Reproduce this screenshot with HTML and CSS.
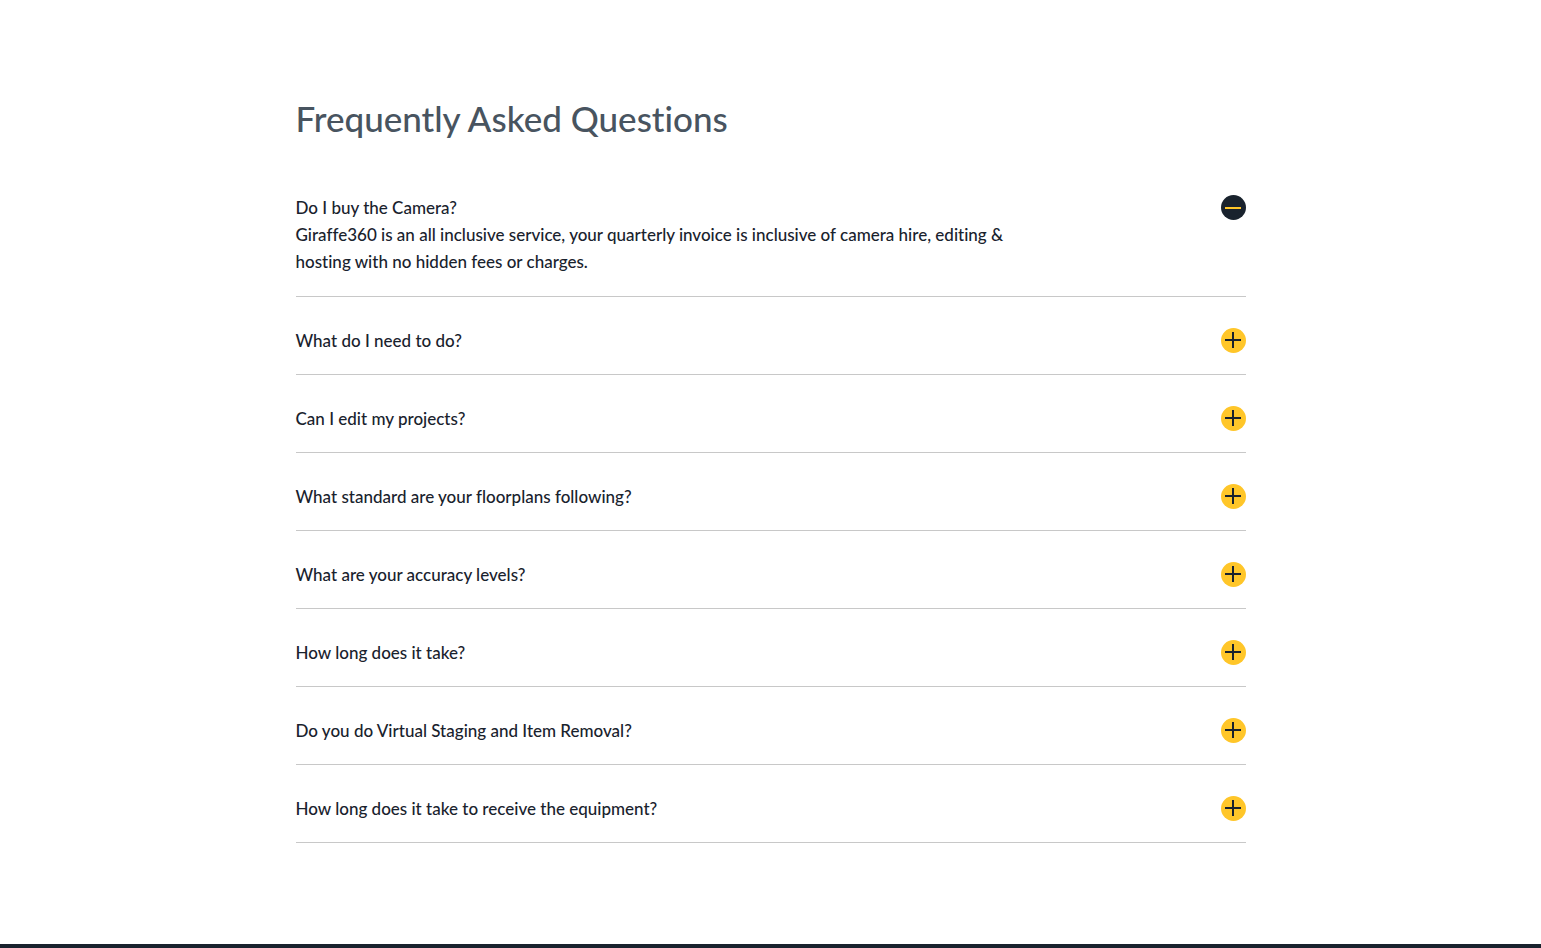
FILE: index.html
```html
<!DOCTYPE html>
<html lang="en">
<head>
    <meta charset="UTF-8">
    <meta name="viewport" content="width=device-width, initial-scale=1.0">
    <title>Frequently Asked Questions</title>
    <link rel="stylesheet" href="styles.css">
</head>
<body>
    <main class="faq">
        <h1 class="faq-title">Frequently Asked Questions</h1>

        <details class="faq-item" open>
            <summary>
                <span>Do I buy the Camera?</span>
                <svg class="icon" viewBox="0 0 25 25" aria-hidden="true"><circle cx="12.5" cy="12.5" r="12.5"/><path class="minus" d="M4 12h16v2H4z"/><path class="plus" d="M4 11h7V4h2v7h7v2h-7v7h-2v-7H4z"/></svg>
            </summary>
            <p class="answer">Giraffe360 is an all inclusive service, your quarterly invoice is inclusive of camera hire, editing &amp; hosting with no hidden fees or charges.</p>
        </details>

        <details class="faq-item">
            <summary>
                <span>What do I need to do?</span>
                <svg class="icon" viewBox="0 0 25 25" aria-hidden="true"><circle cx="12.5" cy="12.5" r="12.5"/><path class="minus" d="M4 12h16v2H4z"/><path class="plus" d="M4 11h7V4h2v7h7v2h-7v7h-2v-7H4z"/></svg>
            </summary>
        </details>

        <details class="faq-item">
            <summary>
                <span>Can I edit my projects?</span>
                <svg class="icon" viewBox="0 0 25 25" aria-hidden="true"><circle cx="12.5" cy="12.5" r="12.5"/><path class="minus" d="M4 12h16v2H4z"/><path class="plus" d="M4 11h7V4h2v7h7v2h-7v7h-2v-7H4z"/></svg>
            </summary>
        </details>

        <details class="faq-item">
            <summary>
                <span>What standard are your floorplans following?</span>
                <svg class="icon" viewBox="0 0 25 25" aria-hidden="true"><circle cx="12.5" cy="12.5" r="12.5"/><path class="minus" d="M4 12h16v2H4z"/><path class="plus" d="M4 11h7V4h2v7h7v2h-7v7h-2v-7H4z"/></svg>
            </summary>
        </details>

        <details class="faq-item">
            <summary>
                <span>What are your accuracy levels?</span>
                <svg class="icon" viewBox="0 0 25 25" aria-hidden="true"><circle cx="12.5" cy="12.5" r="12.5"/><path class="minus" d="M4 12h16v2H4z"/><path class="plus" d="M4 11h7V4h2v7h7v2h-7v7h-2v-7H4z"/></svg>
            </summary>
        </details>

        <details class="faq-item">
            <summary>
                <span>How long does it take?</span>
                <svg class="icon" viewBox="0 0 25 25" aria-hidden="true"><circle cx="12.5" cy="12.5" r="12.5"/><path class="minus" d="M4 12h16v2H4z"/><path class="plus" d="M4 11h7V4h2v7h7v2h-7v7h-2v-7H4z"/></svg>
            </summary>
        </details>

        <details class="faq-item">
            <summary>
                <span>Do you do Virtual Staging and Item Removal?</span>
                <svg class="icon" viewBox="0 0 25 25" aria-hidden="true"><circle cx="12.5" cy="12.5" r="12.5"/><path class="minus" d="M4 12h16v2H4z"/><path class="plus" d="M4 11h7V4h2v7h7v2h-7v7h-2v-7H4z"/></svg>
            </summary>
        </details>

        <details class="faq-item">
            <summary>
                <span>How long does it take to receive the equipment?</span>
                <svg class="icon" viewBox="0 0 25 25" aria-hidden="true"><circle cx="12.5" cy="12.5" r="12.5"/><path class="minus" d="M4 12h16v2H4z"/><path class="plus" d="M4 11h7V4h2v7h7v2h-7v7h-2v-7H4z"/></svg>
            </summary>
        </details>
    </main>
    <footer class="footer"></footer>
</body>
</html>
```
FILE: styles.css
```css
* {
    box-sizing: border-box;
}
body {
    margin: 0;
    background: #fff;
    color: #19222d;
    font-family: Gilroy, Lato, sans-serif;
    font-size: 17px;
    font-weight: 500;
    font-variant-ligatures: none;
    line-height: 27px;
}
.faq {
    max-width: 990px;
    margin: 0 auto;
    padding: 94px 20px 101px;
}
.faq-title {
    margin: 0 0 22px;
    color: #485460;
    font-size: 35px;
    font-weight: 500;
    line-height: 48px;
}
.faq-item {
    padding: 30px 0 20px;
    border-bottom: 1px solid #c8c8c8;
}
summary {
    display: flex;
    align-items: center;
    justify-content: space-between;
    gap: 20px;
    cursor: pointer;
    list-style: none;
}
summary::-webkit-details-marker {
    display: none;
}
.answer {
    max-width: 720px;
    margin: 0;
    padding-bottom: 1px;
}
.icon {
    flex: none;
    width: 25px;
    height: 25px;
    fill: #ffc629;
}
.icon path {
    fill: #19222d;
}
.icon .minus {
    display: none;
}
/* open question: dark circle with a yellow minus */
.faq-item[open] .icon {
    fill: #19222d;
}
.faq-item[open] .minus {
    display: block;
    fill: #ffc629;
}
.faq-item[open] .plus {
    display: none;
}
.footer {
    min-height: 4px;
    background: #19222d;
}
```
